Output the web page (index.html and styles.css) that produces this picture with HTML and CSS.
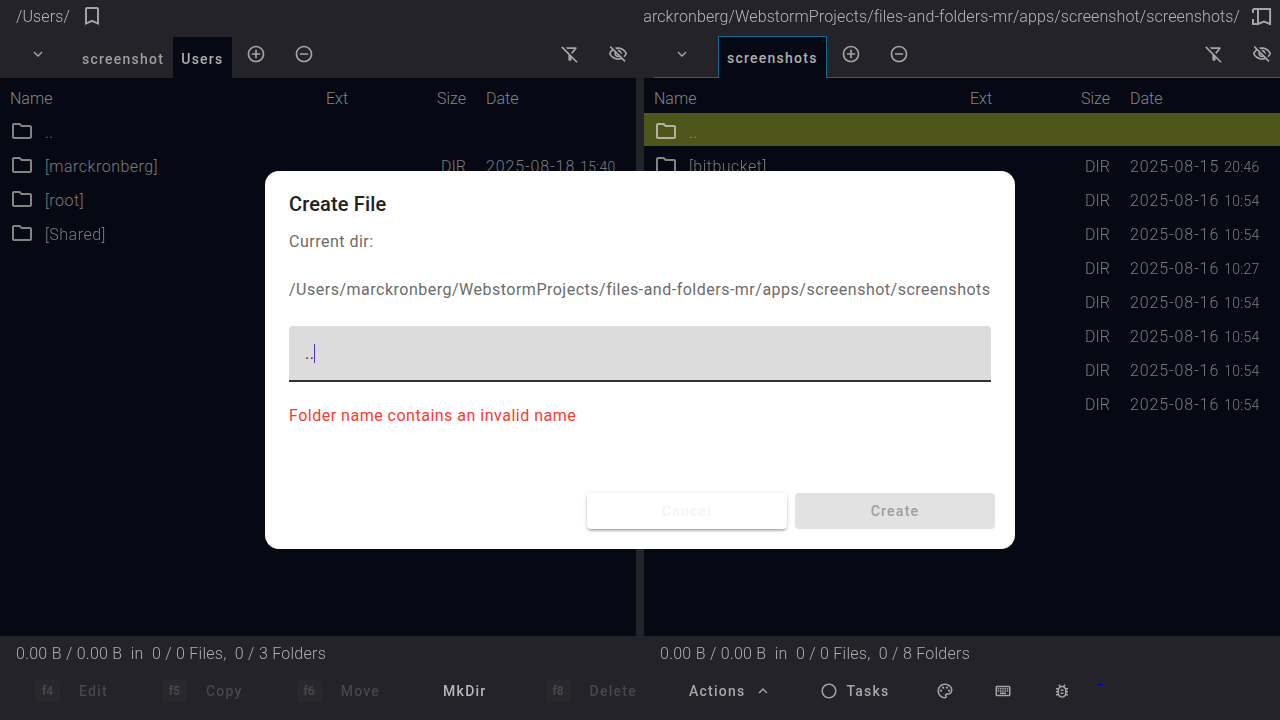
FILE: index.html
```html
<!DOCTYPE html>
<html>
<head>
    <title>Files and Folders</title>
    <meta name="viewport" content="width=device-width, initial-scale=1.0">
    <link rel="stylesheet" href="styles.css">
</head>
<body>
    <svg class="sprites">
      <symbol id="i-folder" viewBox="0 0 24 24"><path d="M9.17 6l2 2H20v10H4V6h5.17M10 4H4c-1.1 0-1.99.9-1.99 2L2 18c0 1.1.9 2 2 2h16c1.1 0 2-.9 2-2V8c0-1.1-.9-2-2-2h-8l-2-2z"/></symbol>
      <symbol id="i-bookmark" viewBox="0 0 24 24"><path d="M17 3H7c-1.1 0-1.99.9-1.99 2L5 21l7-3 7 3V5c0-1.1-.9-2-2-2zm0 15l-5-2.18L7 18V5h10v13z"/></symbol>
      <symbol id="i-bookmarks" viewBox="0 0 24 24"><path fill="none" stroke="#a6a6a6" stroke-width="2" d="M3 4.9H20.1V20L14 17.5 8 20V4.9M3 4.9V9M3 15V20H8"/></symbol>
      <symbol id="i-down" viewBox="0 0 24 24"><path d="M7.41 8.59 12 13.17l4.59-4.58L18 10l-6 6-6-6z"/></symbol>
      <symbol id="i-up" viewBox="0 0 24 24"><path d="M7.41 15.41 12 10.83l4.59 4.58L18 14l-6-6-6 6z"/></symbol>
      <symbol id="i-add" viewBox="0 0 24 24"><path d="M13 7h-2v4H7v2h4v4h2v-4h4v-2h-4V7zm-1-5C6.48 2 2 6.48 2 12s4.48 10 10 10 10-4.48 10-10S17.52 2 12 2zm0 18c-4.41 0-8-3.59-8-8s3.59-8 8-8 8 3.59 8 8-3.59 8-8 8z"/></symbol>
      <symbol id="i-remove" viewBox="0 0 24 24"><path d="M7 11v2h10v-2H7zm5-9C6.48 2 2 6.48 2 12s4.48 10 10 10 10-4.48 10-10S17.52 2 12 2zm0 18c-4.41 0-8-3.59-8-8s3.59-8 8-8 8 3.59 8 8-3.59 8-8 8z"/></symbol>
      <symbol id="i-filter-off" viewBox="0 0 24 24"><path d="M16.95 6l-3.57 4.55 1.43 1.43c1.03-1.31 4.98-6.37 4.98-6.37C20.3 5.05 19.9 4 19 4H6.83l2 2h8.12zM2.81 2.81 1.39 4.22 10 13v6c0 .55.45 1 1 1h2c.55 0 1-.45 1-1v-2.17l5.78 5.78 1.41-1.41L2.81 2.81z"/></symbol>
      <symbol id="i-eye-off" viewBox="0 0 24 24"><path d="M12 6c3.79 0 7.17 2.13 8.82 5.5-.59 1.22-1.42 2.27-2.41 3.12l1.41 1.41c1.39-1.23 2.49-2.77 3.18-4.53C21.27 7.11 17 4 12 4c-1.27 0-2.49.2-3.64.57l1.65 1.65C10.66 6.09 11.32 6 12 6zm-1.07 1.14L13 9.21c.57.25 1.03.71 1.28 1.28l2.07 2.07c.08-.34.14-.7.14-1.07C16.5 9.01 14.48 7 12 7c-.37 0-.72.05-1.07.14zM2.01 3.87l2.68 2.68C3.06 7.83 1.77 9.53 1 11.5 2.73 15.89 7 19 12 19c1.52 0 2.98-.29 4.32-.82l3.42 3.42 1.41-1.41L3.42 2.45 2.01 3.87zm7.5 7.5l2.61 2.61c-.04.01-.08.02-.12.02-1.38 0-2.5-1.12-2.5-2.5 0-.05.01-.08.01-.13zm-3.4-3.4l1.75 1.75c-.23.55-.36 1.15-.36 1.78 0 2.48 2.02 4.5 4.5 4.5.63 0 1.23-.13 1.77-.36l.98.98c-.88.24-1.8.38-2.75.38-3.79 0-7.17-2.13-8.82-5.5.7-1.43 1.72-2.61 2.93-3.53z"/></symbol>
      <symbol id="i-ring" viewBox="0 0 24 24"><path d="M12 2C6.48 2 2 6.48 2 12s4.48 10 10 10 10-4.48 10-10S17.52 2 12 2zm0 18c-4.42 0-8-3.58-8-8s3.58-8 8-8 8 3.58 8 8-3.58 8-8 8z"/></symbol>
      <symbol id="i-palette" viewBox="0 0 24 24"><path d="M12 22C6.49 22 2 17.51 2 12S6.49 2 12 2s10 4.04 10 9c0 3.31-2.69 6-6 6h-1.77c-.28 0-.5.22-.5.5 0 .12.05.23.13.33.41.47.64 1.06.64 1.67 0 1.38-1.12 2.5-2.5 2.5zm0-18c-4.41 0-8 3.59-8 8s3.59 8 8 8c.28 0 .5-.22.5-.5 0-.16-.08-.28-.14-.35-.41-.46-.63-1.05-.63-1.65 0-1.38 1.12-2.5 2.5-2.5H16c2.21 0 4-1.79 4-4 0-3.86-3.59-7-8-7z"/><circle cx="6.5" cy="11.5" r="1.5"/><circle cx="9.5" cy="7.5" r="1.5"/><circle cx="14.5" cy="7.5" r="1.5"/><circle cx="17.5" cy="11.5" r="1.5"/></symbol>
      <symbol id="i-keyboard" viewBox="0 0 24 24"><path d="M20 7v10H4V7h16m0-2H4c-1.1 0-1.99.9-1.99 2L2 17c0 1.1.9 2 2 2h16c1.1 0 2-.9 2-2V7c0-1.1-.9-2-2-2zm-9 3h2v2h-2zm0 3h2v2h-2zM8 8h2v2H8zm0 3h2v2H8zm-3 0h2v2H5zm0-3h2v2H5zm3 6h8v2H8zm6-3h2v2h-2zm0-3h2v2h-2zm3 3h2v2h-2zm0-3h2v2h-2z"/></symbol>
      <symbol id="i-bug" viewBox="0 0 24 24"><path d="M20 8h-2.81c-.45-.78-1.07-1.45-1.82-1.96L17 4.41 15.59 3l-2.17 2.17C12.96 5.06 12.49 5 12 5c-.49 0-.96.06-1.41.17L8.41 3 7 4.41l1.62 1.63C7.88 6.55 7.26 7.22 6.81 8H4v2h2.09c-.05.33-.09.66-.09 1v1H4v2h2v1c0 .34.04.67.09 1H4v2h2.81c1.04 1.79 2.97 3 5.19 3s4.15-1.21 5.19-3H20v-2h-2.09c.05-.33.09-.66.09-1v-1h2v-2h-2v-1c0-.34-.04-.67-.09-1H20V8zm-4 4v3c0 .22-.02.47-.06.7l-.1.65-.37.65c-.72 1.24-2.04 2-3.47 2s-2.75-.77-3.47-2l-.37-.64-.1-.65C8.02 15.48 8 15.23 8 15v-4c0-.23.02-.48.06-.7l.1-.65.37-.65c.3-.52.72-.97 1.21-1.31l.57-.39.74-.18c.31-.08.63-.12.95-.12.33 0 .64.04.95.12l.68.16.61.42c.5.34.91.78 1.21 1.31l.38.65.1.65c.04.22.07.47.07.69v1zm-6 2h4v2h-4zm0-4h4v2h-4z"/></symbol>
    </svg>

    <div id="app">
      <div class="panes">

        <section class="pane">
          <div class="pathbar">
            <span class="path">/Users/</span>
            <svg class="icon bookmark"><use href="#i-bookmark"/></svg>
          </div>
          <div class="tabbar">
            <svg class="icon chevron"><use href="#i-down"/></svg>
            <div class="tabs">
              <div class="tab">screenshot</div>
              <div class="tab tab-selected">Users</div>
            </div>
            <svg class="icon tool tool-add"><use href="#i-add"/></svg>
            <svg class="icon tool tool-remove"><use href="#i-remove"/></svg>
            <svg class="icon tool tool-filter"><use href="#i-filter-off"/></svg>
            <svg class="icon tool tool-eye"><use href="#i-eye-off"/></svg>
          </div>
          <div class="list">
            <div class="row head"><span>Name</span><span>Ext</span><span class="size">Size</span><span class="date">Date</span></div>
            <div class="row"><span class="name"><svg class="icon folder"><use href="#i-folder"/></svg><span class="dots">..</span></span></div>
            <div class="row"><span class="name"><svg class="icon folder"><use href="#i-folder"/></svg>[marckronberg]</span><span></span><span class="size">DIR</span><span class="date">2025-08-18<small>15:40</small></span></div>
            <div class="row"><span class="name"><svg class="icon folder"><use href="#i-folder"/></svg>[root]</span></div>
            <div class="row"><span class="name"><svg class="icon folder"><use href="#i-folder"/></svg>[Shared]</span></div>
          </div>
        </section>

        <section class="pane">
          <div class="pathbar pathbar-right">
            <span class="path">/Users/marckronberg/WebstormProjects/files-and-folders-mr/apps/screenshot/screenshots/</span>
            <svg class="icon bookmark"><use href="#i-bookmarks"/></svg>
          </div>
          <div class="tabbar tabbar-active">
            <svg class="icon chevron"><use href="#i-down"/></svg>
            <div class="tabs">
              <div class="tab tab-selected tab-active">screenshots</div>
            </div>
            <svg class="icon tool tool-add"><use href="#i-add"/></svg>
            <svg class="icon tool tool-remove"><use href="#i-remove"/></svg>
            <svg class="icon tool tool-filter"><use href="#i-filter-off"/></svg>
            <svg class="icon tool tool-eye"><use href="#i-eye-off"/></svg>
          </div>
          <div class="list">
            <div class="row head"><span>Name</span><span>Ext</span><span class="size">Size</span><span class="date">Date</span></div>
            <div class="row row-focused"><span class="name"><svg class="icon folder"><use href="#i-folder"/></svg><span class="dots">..</span></span></div>
            <div class="row"><span class="name"><svg class="icon folder"><use href="#i-folder"/></svg>[bitbucket]</span><span></span><span class="size">DIR</span><span class="date">2025-08-15<small>20:46</small></span></div>
            <div class="row"><span class="name"></span><span></span><span class="size">DIR</span><span class="date">2025-08-16<small>10:54</small></span></div>
            <div class="row"><span class="name"></span><span></span><span class="size">DIR</span><span class="date">2025-08-16<small>10:54</small></span></div>
            <div class="row"><span class="name"></span><span></span><span class="size">DIR</span><span class="date">2025-08-16<small>10:27</small></span></div>
            <div class="row"><span class="name"></span><span></span><span class="size">DIR</span><span class="date">2025-08-16<small>10:54</small></span></div>
            <div class="row"><span class="name"></span><span></span><span class="size">DIR</span><span class="date">2025-08-16<small>10:54</small></span></div>
            <div class="row"><span class="name"></span><span></span><span class="size">DIR</span><span class="date">2025-08-16<small>10:54</small></span></div>
            <div class="row"><span class="name"></span><span></span><span class="size">DIR</span><span class="date">2025-08-16<small>10:54</small></span></div>
          </div>
        </section>
      </div>

      <footer class="footer">
        <div class="status">
          <div class="status-text">0.00 B / 0.00 B &nbsp;in &nbsp;0 / 0 Files, &nbsp;0 / 3 Folders</div>
          <div class="status-text">0.00 B / 0.00 B &nbsp;in &nbsp;0 / 0 Files, &nbsp;0 / 8 Folders</div>
        </div>
        <div class="buttons">
          <div class="btn disabled"><span class="key">f4</span>Edit</div>
          <div class="btn disabled"><span class="key">f5</span>Copy</div>
          <div class="btn disabled"><span class="key">f6</span>Move</div>
          <div class="btn btn-mkdir">MkDir</div>
          <div class="btn btn-delete disabled"><span class="key">f8</span>Delete</div>
          <div class="btn btn-actions">Actions<svg class="icon chevron-small"><use href="#i-up"/></svg></div>
          <div class="btn btn-tasks"><svg class="icon ring"><use href="#i-ring"/></svg>Tasks</div>
          <svg class="icon action-icon palette"><use href="#i-palette"/></svg>
          <svg class="icon action-icon keyboard"><use href="#i-keyboard"/></svg>
          <svg class="icon action-icon bug"><use href="#i-bug"/></svg>
          <span class="blue-dash"></span>
        </div>
      </footer>
    </div>

    <div class="backdrop">
      <div class="dialog">
        <h2>Create File</h2>
        <p class="label">Current dir:</p>
        <p class="label dir">/Users/marckronberg/WebstormProjects/files-and-folders-mr/apps/screenshot/screenshots</p>
        <div class="field">..<span class="caret"></span></div>
        <p class="error">Folder name contains an invalid name</p>
        <div class="dialog-actions">
          <button class="raised cancel">Cancel</button>
          <button class="raised create">Create</button>
        </div>
      </div>
    </div>
</body>
</html>
```

FILE: styles.css
```css
body {
    font-family: Roboto, "Liberation Sans", sans-serif;
    margin: 0;
    padding: 0;
    background-color: #232329;
    overflow: hidden;
}
.sprites {
    display: none;
}
.icon {
    display: block;
    flex: none;
    fill: #a6a6a6;
}
#app {
    display: flex;
    flex-direction: column;
    height: 720px;
    opacity: 0.999;
}
.panes {
    display: flex;
    gap: 8px;
    height: 636px;
}
.pane {
    display: flex;
    flex-direction: column;
    width: 636px;
    min-width: 0;
}

/* path line */
.pathbar {
    display: flex;
    align-items: center;
    height: 32px;
    padding-left: 16px;
    color: #b8b8b8;
    font-size: 16px;
    font-weight: 300;
    letter-spacing: 0.11px;
    white-space: nowrap;
    overflow: hidden;
}
.pathbar .bookmark {
    width: 24px;
    height: 24px;
    margin-left: 10px;
}
.pathbar-right {
    justify-content: flex-end;
    padding-left: 0;
    padding-right: 6px;
}

/* tabs */
.tabbar {
    position: relative;
    display: flex;
    align-items: center;
    box-sizing: border-box;
    height: 46px;
    padding-bottom: 2px;
}
.tabbar-active::after {
    content: "";
    position: absolute;
    left: 10px;
    right: 0;
    bottom: 0;
    height: 1px;
    background-color: #0f6a96;
}
.chevron {
    width: 18px;
    height: 18px;
    margin-left: 29px;
}
.tabs {
    display: flex;
    align-self: flex-end;
    margin-left: 26px;
    margin-bottom: -2px;
}
.tab {
    box-sizing: border-box;
    height: 41px;
    padding: 13px 8px 0;
    border: 1px solid transparent;
    border-bottom: none;
    font-size: 14px;
    font-weight: 500;
    letter-spacing: 1.25px;
    color: #a0a0a0;
    white-space: nowrap;
}
.tab-selected {
    padding: 13px 7px 0;
    background-color: #070a14;
    color: #b0b0b0;
}
.tab-active {
    position: relative;
    z-index: 1;
    height: 42px;
    margin-left: 1px;
    padding: 13px 8px 0;
    border-color: #0f6a96;
    color: #aeaeae;
}
.tool {
    width: 20px;
    height: 20px;
}
.tool-add {
    margin-left: 14px;
}
.tool-remove {
    margin-left: 28px;
}
.tool-filter {
    margin-left: auto;
}
.tool-eye {
    margin-left: 28px;
    margin-right: 8px;
}

/* file list */
.list {
    flex: 1;
    background-color: #070a14;
    display: flex;
    flex-direction: column;
    gap: 1px;
}
.row {
    display: grid;
    grid-template-columns: 316px 70px 70px 1fr;
    align-items: center;
    box-sizing: border-box;
    height: 33px;
    padding: 6px 0 0 10px;
    color: #7c7c7c;
    font-size: 16px;
    font-weight: 300;
    white-space: nowrap;
}
.head {
    height: 34px;
    color: #868686;
}
.name {
    display: flex;
    align-items: center;
    gap: 11px;
    letter-spacing: 0.5px;
}
.size {
    text-align: right;
}
.date {
    padding-left: 20px;
    letter-spacing: 0.9px;
}
.head .date {
    letter-spacing: 0;
}
.date small {
    margin-left: 5px;
    font-size: 14px;
    letter-spacing: 0.3px;
}
.folder {
    width: 24px;
    height: 24px;
    margin-top: -4px;
    fill: #858585;
}
.row-focused {
    background-color: #4f571c;
}
.row-focused .folder {
    fill: #b3b5a0;
}
.row-focused .dots {
    color: #a0a37e;
}

/* bottom bar */
.footer {
    flex: 1;
    display: flex;
    flex-direction: column;
}
.status {
    display: flex;
    gap: 8px;
    height: 34px;
}
.status-text {
    width: 636px;
    box-sizing: border-box;
    padding: 1px 0 0 16px;
    line-height: 34px;
    color: #b0b0b0;
    font-size: 16px;
    font-weight: 300;
    letter-spacing: 0.26px;
}
.buttons {
    display: flex;
    align-items: center;
    gap: 54px;
    height: 42px;
    padding-left: 35px;
}
.btn {
    display: flex;
    align-items: center;
    font-size: 14px;
    font-weight: 500;
    letter-spacing: 1.25px;
    color: #a8a8a8;
    white-space: nowrap;
}
.disabled {
    color: #48484e;
}
.btn-mkdir {
    margin-left: 9px;
    margin-right: 5px;
    color: #b8b8b8;
}
.key {
    width: 25px;
    height: 22px;
    margin-right: 19px;
    border-radius: 4px;
    background-color: #29292e;
    line-height: 22px;
    text-align: center;
    font-size: 12px;
    font-weight: 700;
    letter-spacing: 0;
    color: #48484e;
}
.btn-delete {
    margin-right: -2px;
}
.chevron-small {
    width: 18px;
    height: 18px;
    margin-left: 9px;
}
.btn-tasks {
    margin-left: -6px;
}
.ring {
    width: 18px;
    height: 18px;
    margin-right: 8px;
}
.action-icon {
    width: 18px;
    height: 18px;
}
.palette {
    margin-left: -8px;
}
.keyboard {
    margin-left: -14px;
}
.bug {
    margin-left: -13px;
}
.blue-dash {
    width: 5px;
    height: 1px;
    margin-left: -27px;
    margin-bottom: 14px;
    background-color: #0000c0;
}

/* dialog */
.backdrop {
    position: fixed;
    inset: 0;
    display: flex;
    align-items: center;
    justify-content: center;
}
.dialog {
    box-sizing: border-box;
    width: 750px;
    height: 378px;
    padding: 20px 24px 20px;
    background-color: white;
    border-radius: 14px;
    display: flex;
    flex-direction: column;
    opacity: 0.999;
}
.dialog h2 {
    margin: 0 0 13px;
    font-size: 20px;
    font-weight: 500;
    line-height: 26px;
    letter-spacing: 0.15px;
    color: #212121;
}
.label {
    margin: 0 0 24px;
    font-size: 16px;
    line-height: 24px;
    letter-spacing: 0.5px;
    color: #6b6b6b;
}
.dir {
    margin-bottom: 24px;
    white-space: nowrap;
}
.field {
    box-sizing: border-box;
    height: 56px;
    padding: 16px 16px 0;
    background-color: #dcdcdc;
    border-radius: 4px 4px 0 0;
    border-bottom: 2px solid #333;
    color: #333;
    font-size: 16px;
    line-height: 24px;
    letter-spacing: 0.5px;
}
.caret {
    display: inline-block;
    width: 1px;
    height: 19px;
    vertical-align: -4px;
    background-color: #5a2fc8;
}
.error {
    margin: 22px 0 0;
    font-size: 16px;
    line-height: 24px;
    letter-spacing: 0.5px;
    color: #f93a30;
}
.dialog-actions {
    display: flex;
    justify-content: flex-end;
    gap: 8px;
    margin-top: auto;
    margin-right: -4px;
}
.raised {
    width: 200px;
    height: 36px;
    border: none;
    border-radius: 4px;
    font-family: Roboto, sans-serif;
    font-size: 14px;
    font-weight: 500;
    letter-spacing: 1.25px;
}
.cancel {
    background-color: white;
    color: #f5f5f5;
    box-shadow: 0 2px 3px -1px rgba(0,0,0,0.4), 0 1px 5px 0 rgba(0,0,0,0.12);
}
.create {
    background-color: #e2e2e2;
    color: #9e9e9e;
}
```
